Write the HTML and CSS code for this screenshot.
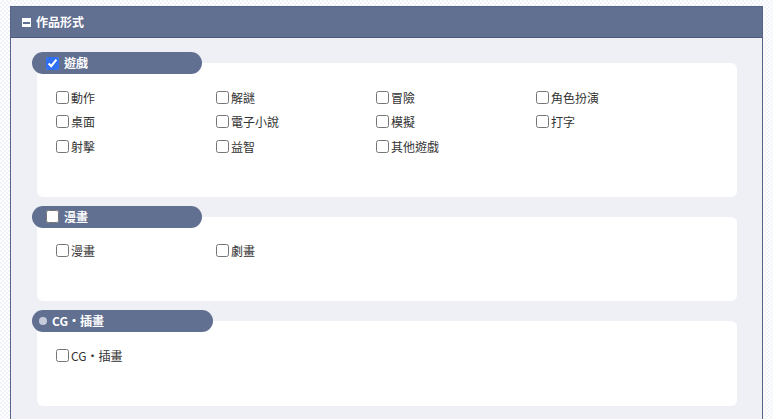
FILE: index.html
```html
<!DOCTYPE html>
<html lang="zh-Hant">
<head>
<meta charset="utf-8">
<title>作品形式</title>
<link rel="stylesheet" href="styles.css">
</head>
<body>
<div class="panel">
  <div class="panel-head">
    <span class="collapse-icon"></span>
    <span class="panel-title">作品形式</span>
  </div>
  <div class="panel-body">
    <section class="group">
      <div class="pill">
        <input type="checkbox" class="pill-check" checked>
        <span class="pill-label">遊戲</span>
      </div>
      <div class="card">
        <div class="options">
          <label class="opt"><input type="checkbox"><span>動作</span></label>
          <label class="opt"><input type="checkbox"><span>解謎</span></label>
          <label class="opt"><input type="checkbox"><span>冒險</span></label>
          <label class="opt"><input type="checkbox"><span>角色扮演</span></label>
          <label class="opt"><input type="checkbox"><span>桌面</span></label>
          <label class="opt"><input type="checkbox"><span>電子小說</span></label>
          <label class="opt"><input type="checkbox"><span>模擬</span></label>
          <label class="opt"><input type="checkbox"><span>打字</span></label>
          <label class="opt"><input type="checkbox"><span>射擊</span></label>
          <label class="opt"><input type="checkbox"><span>益智</span></label>
          <label class="opt"><input type="checkbox"><span>其他遊戲</span></label>
        </div>
      </div>
    </section>
    <section class="group">
      <div class="pill">
        <input type="checkbox" class="pill-check">
        <span class="pill-label">漫畫</span>
      </div>
      <div class="card">
        <div class="options">
          <label class="opt"><input type="checkbox"><span>漫畫</span></label>
          <label class="opt"><input type="checkbox"><span>劇畫</span></label>
        </div>
      </div>
    </section>
    <section class="group">
      <div class="pill pill-wide">
        <span class="pill-dot"></span>
        <span class="pill-label">CG・插畫</span>
      </div>
      <div class="card">
        <div class="options">
          <label class="opt"><input type="checkbox"><span>CG・插畫</span></label>
        </div>
      </div>
    </section>
  </div>
</div>
</body>
</html>
```
FILE: styles.css
```css
html, body {
  margin: 0;
  padding: 0;
}
body {
  width: 773px;
  height: 419px;
  overflow: hidden;
  padding: 6px 0 0 10px;
  box-sizing: border-box;
  font-family: "Noto Sans CJK TC", "Noto Sans", sans-serif;
  font-size: 12px;
  color: #333;
  background-color: #ffffff;
  background-image: conic-gradient(#f0f3f8 25%, #ffffff 0 50%, #f0f3f8 0 75%, #ffffff 0);
  background-size: 4px 4px;
}
.panel {
  width: 753px;
  border: 1px solid #56648a;
  border-bottom: none;
  background: #eff0f5;
  box-sizing: border-box;
  min-height: 420px;
}
.panel-head {
  height: 30px;
  background: #616f91;
  border-bottom: 1px solid #4c5a7e;
  display: flex;
  align-items: center;
  padding-left: 11px;
  gap: 5px;
}
.collapse-icon {
  width: 9px;
  height: 9px;
  background: #fff;
  position: relative;
  flex: none;
}
.collapse-icon::after {
  content: "";
  position: absolute;
  left: 1px;
  right: 1px;
  top: 4px;
  height: 2px;
  background: #616f91;
}
.panel-title {
  color: #fff;
  font-weight: bold;
  font-size: 12px;
  line-height: 1;
}
.panel-body {
  padding: 14px 25px 0 26px;
}
.group {
  margin-bottom: 9px;
}
.pill {
  position: relative;
  z-index: 1;
  margin-left: -5px;
  width: 170px;
  height: 22px;
  border-radius: 11px;
  background: #616f91;
  display: flex;
  align-items: center;
  padding-left: 14px;
  box-sizing: border-box;
  gap: 5px;
}
.pill-wide {
  width: 181px;
  padding-left: 7px;
}
.pill-check {
  margin: 0;
  width: 13px;
  height: 13px;
  accent-color: #2f6ff2;
}
.pill-dot {
  width: 8px;
  height: 8px;
  border-radius: 50%;
  background: #c6cbdb;
}
.pill-label {
  color: #fff;
  font-weight: bold;
  font-size: 12px;
  line-height: 1;
}
.card {
  margin-top: -11px;
  background: #fff;
  border-radius: 6px;
  padding: 22px 19px 38px 19px;
}
.options {
  display: grid;
  grid-template-columns: repeat(4, 160px);
  grid-auto-rows: 24.5px;
}
.opt {
  display: flex;
  align-items: center;
  gap: 2px;
  font-size: 12px;
  color: #333;
  white-space: nowrap;
}
.opt input {
  margin: 0;
  width: 13px;
  height: 13px;
}
```
